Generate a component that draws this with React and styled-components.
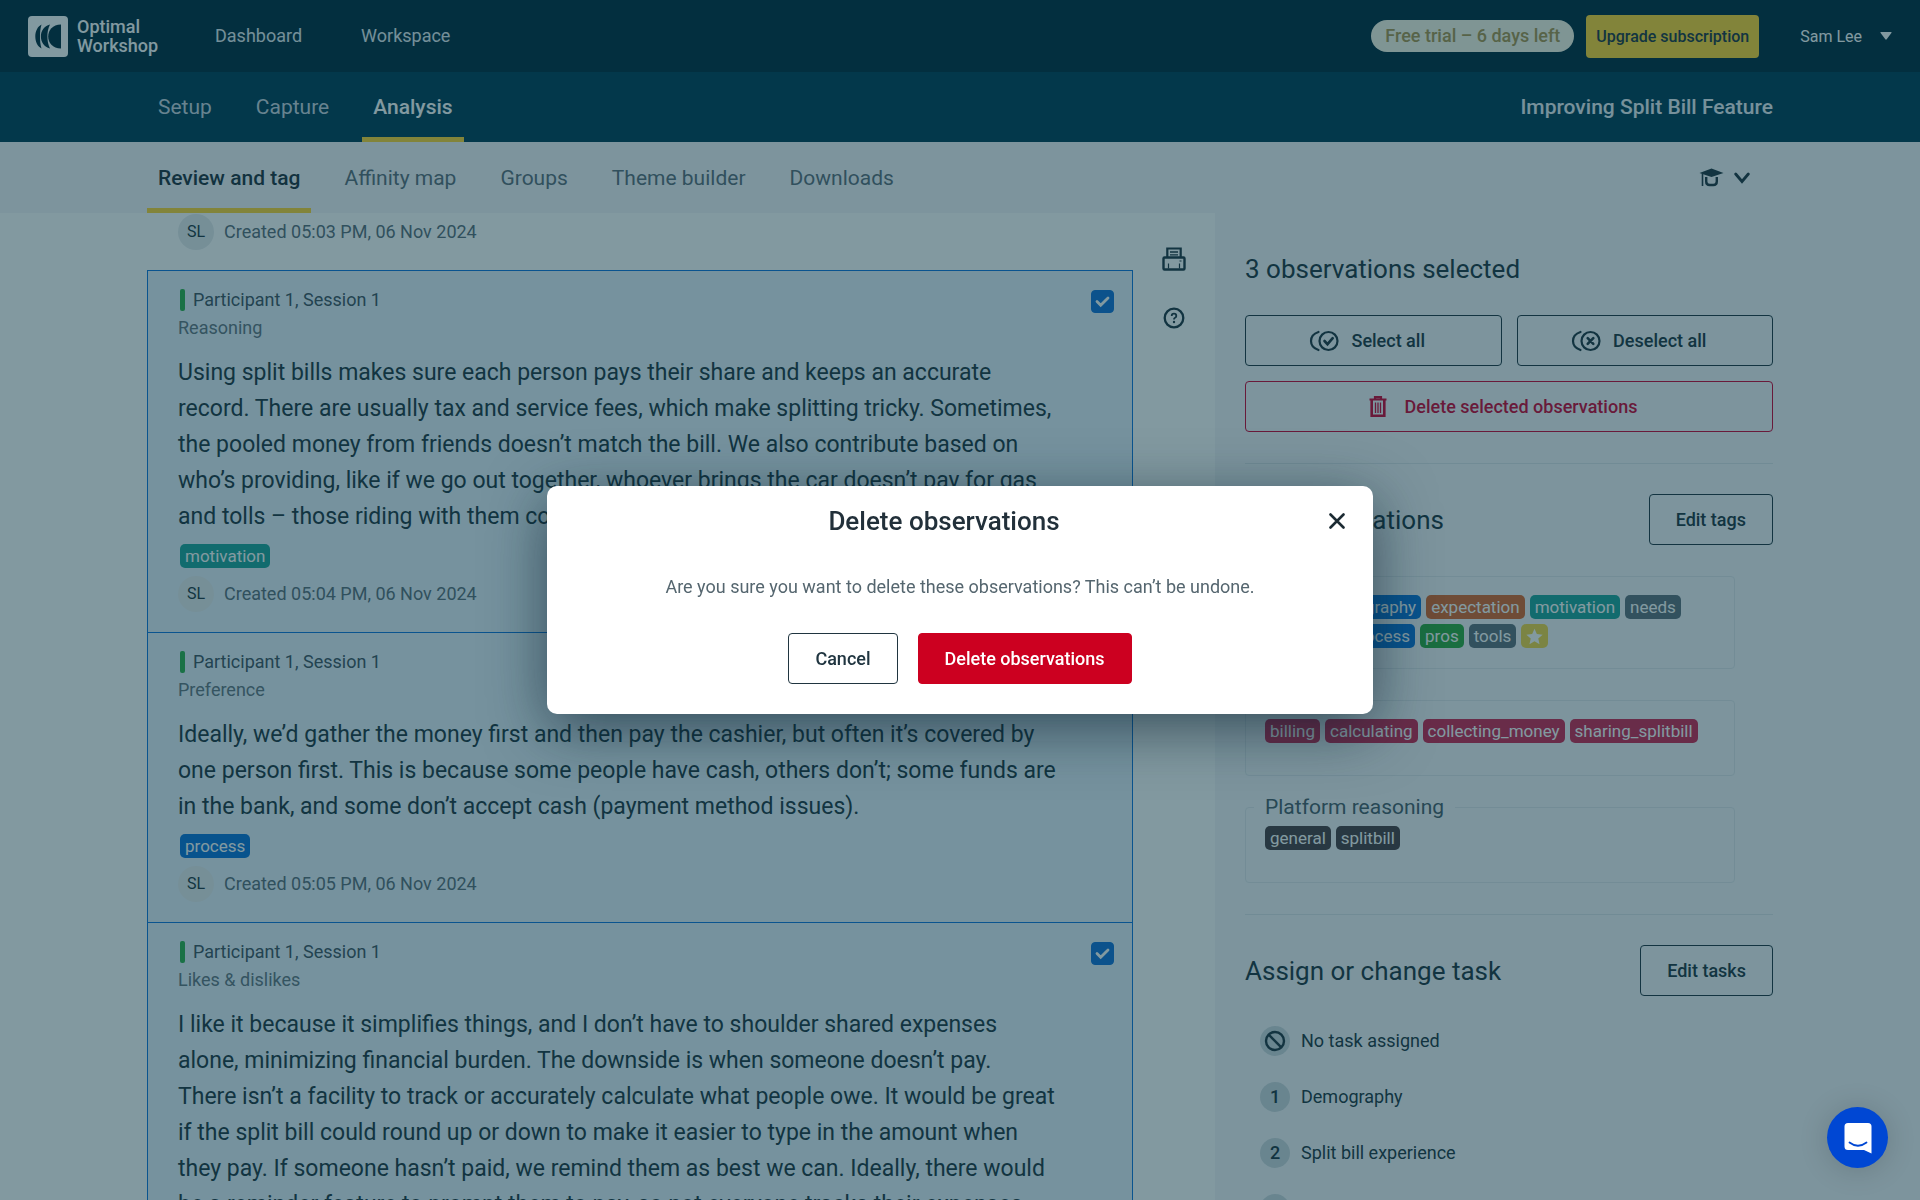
import React from "react";
import styled, { createGlobalStyle, css } from "styled-components";

const GlobalStyle = createGlobalStyle`
  * {
    box-sizing: border-box;
  }

  body {
    margin: 0;
    font-family: Roboto, "Liberation Sans", sans-serif;
    font-size: 18px;
    line-height: 28px;
    color: #203540;
    background: #ffffff;
  }

  h1, h2, h3, p, ul {
    margin: 0;
    padding: 0;
    font-weight: 400;
  }

  button {
    font-family: inherit;
    cursor: pointer;
  }
`;

const Page = styled.div`
  display: flex;
  flex-direction: column;
  height: 100vh;
  overflow: hidden;
`;

/* ---------- top bar ---------- */

const TopBar = styled.header`
  display: flex;
  align-items: center;
  flex-shrink: 0;
  height: 72px;
  padding: 0 28px;
  background: #002a3c;
`;

const Brand = styled.a`
  display: flex;
  align-items: center;
  gap: 9px;
  width: 187px;
  color: #ffffff;
  font-weight: 500;
  line-height: 19px;
  text-decoration: none;
`;

const TopLinks = styled.nav`
  display: flex;
  flex: 1;
  gap: 59px;
`;

const TopLink = styled.a`
  color: #e3eaf0;
  text-decoration: none;
`;

const TrialPill = styled.span`
  padding: 2px 14px;
  border-radius: 16px;
  background: #f9f6e6;
  color: #a8934f;
  font-weight: 500;
`;

const UpgradeButton = styled.button`
  height: 43px;
  margin-left: 12px;
  padding: 0 10px;
  border: 0;
  border-radius: 4px;
  background: #ffd433;
  color: #203540;
  font-size: 16px;
  font-weight: 500;
`;

const UserButton = styled.button`
  display: flex;
  align-items: center;
  gap: 18px;
  margin-left: 41px;
  padding: 0;
  border: 0;
  background: none;
  color: #ffffff;
  font-size: 16px;
`;

/* ---------- study tabs ---------- */

const StudyBar = styled.div`
  display: flex;
  align-items: center;
  justify-content: space-between;
  flex-shrink: 0;
  height: 70px;
  padding: 0 147px;
  background: #003c54;
  color: #e9eef5;
  font-size: 21px;
`;

const SubBar = styled(StudyBar)`
  height: 71px;
  background: #f4f5f9;
  color: #203540;
`;

const Tabs = styled.nav`
  display: flex;
  height: 100%;
  gap: 22px;
`;

const Tab = styled.a`
  display: flex;
  align-items: center;
  padding: 5px 11px 0;
  border-bottom: 5px solid transparent;
  color: ${(props) => (props.$dark ? "#c8d3de" : "#5c6c78")};
  text-decoration: none;

  ${(props) =>
    props.$active &&
    css`
      border-color: #ffd433;
      color: ${props.$dark ? "#ffffff" : "#1f313c"};
      font-weight: 500;
    `}
`;

const StudyTitle = styled.h1`
  font-size: 21px;
  font-weight: 500;
`;

const LearnButton = styled.button`
  display: flex;
  align-items: center;
  gap: 10px;
  margin-right: 23px;
  padding: 0;
  border: 0;
  background: none;
  color: #203540;
`;

/* ---------- content ---------- */

const Content = styled.div`
  display: flex;
  flex: 1;
  min-height: 0;
  padding-left: 147px;
`;

const Feed = styled.main`
  flex: 1;
  min-width: 0;
  overflow: hidden;
`;

const Card = styled.article`
  padding: 15px 28px 20px 30px;
  border: 1px solid #0f74dc;
  border-bottom: 0;
  background: #e6f1fb;

  ${(props) =>
    props.$plain &&
    css`
      padding-top: 0;
      border-color: transparent;
      background: none;
    `}
`;

const CardTop = styled.div`
  display: flex;
  align-items: flex-start;
  justify-content: space-between;
`;

const Participant = styled.h2`
  display: flex;
  align-items: center;
  gap: 8px;
  padding-left: 2px;
  color: #41525f;
  font-size: 18px;

  &::before {
    content: "";
    width: 5px;
    height: 22px;
    border-radius: 2px;
    background: #2fae4b;
  }
`;

const Question = styled.p`
  color: #64747f;
`;

const CheckLabel = styled.label`
  display: grid;
  margin: 4px -10px 0 0;

  > * {
    grid-area: 1 / 1;
  }
`;

const CheckBox = styled.input`
  appearance: none;
  width: 23px;
  height: 23px;
  margin: 0;
  border: 1px solid #1271d6;
  border-radius: 4px;

  &:checked {
    background: #1271d6;
  }
`;

const Quote = styled.p`
  margin: 13px 0 9px;
  color: #203540;
  font-size: 23px;
  line-height: 36px;
  white-space: pre-line;
`;

const TagList = styled.div`
  display: flex;
  flex-wrap: wrap;
  gap: 5px;
  padding-left: ${(props) => props.$indent}px;
`;

const Tag = styled.span`
  display: flex;
  align-items: center;
  height: 24px;
  padding: 0 5px;
  border-radius: 5px;
  background: ${(props) => props.$color};
  color: #ffffff;
  font-size: 17px;
`;

const Meta = styled.div`
  display: flex;
  align-items: center;
  gap: 10px;
  margin-top: ${(props) => (props.$first ? 0 : 8)}px;
  color: #5b6c78;
`;

const Avatar = styled.span`
  display: grid;
  place-items: center;
  width: 36px;
  height: 36px;
  border-radius: 50%;
  background: #e6eaed;
  color: #203540;
  font-size: 16px;
`;

const Tools = styled.div`
  display: flex;
  flex-direction: column;
  align-items: center;
  gap: 36px;
  width: 82px;
  padding-top: 34px;
`;

const ToolButton = styled.button`
  display: flex;
  padding: 0;
  border: 0;
  background: none;
  color: #1f3440;
`;

/* ---------- side panel ---------- */

const Panel = styled.aside`
  width: 705px;
  padding: 38px 147px 0 30px;
  background: #f4f5f9;
  overflow: hidden;
`;

const PanelTitle = styled.h2`
  font-size: 26px;
  line-height: 36px;
`;

const PanelHead = styled.div`
  display: flex;
  align-items: center;
  justify-content: space-between;
`;

const Actions = styled.div`
  display: grid;
  grid-template-columns: 1fr 1fr;
  gap: 15px;
  margin-top: 28px;
`;

const Button = styled.button`
  display: flex;
  align-items: center;
  justify-content: center;
  gap: 12px;
  height: 51px;
  padding: 0 26px;
  border: 1px solid currentColor;
  border-radius: 4px;
  background: transparent;
  color: ${(props) => (props.$danger ? "#cc0033" : "#203540")};
  font-size: 18px;
  font-weight: 500;

  ${(props) =>
    props.$icon &&
    css`
      padding-right: 38px;
    `}

  ${(props) =>
    props.$wide &&
    css`
      grid-column: 1 / -1;
      gap: 18px;
    `}

  ${(props) =>
    props.$solid &&
    css`
      border-color: #cc0020;
      background: #cc0020;
      color: #ffffff;
    `}
`;

const Divider = styled.hr`
  height: 1px;
  margin: 31px 0 30px;
  border: 0;
  background: #dde3e9;
`;

const TagGroup = styled.fieldset`
  min-height: 90px;
  margin: 17px 38px 0 0;
  padding: 5px 8px 20px;
  border: 1px solid #e0e5eb;
  border-radius: 4px;
`;

const Legend = styled.legend`
  padding: 0 11px;
  color: #4a5c69;
  font-size: 21px;
`;

const TaskList = styled.ul`
  display: flex;
  flex-direction: column;
  gap: 26px;
  margin-top: 30px;
  padding-left: 15px;
  list-style: none;
`;

const Task = styled.li`
  display: flex;
  align-items: center;
  gap: 11px;
  height: 30px;
`;

const TaskBadge = styled.span`
  display: grid;
  place-items: center;
  width: 30px;
  height: 30px;
  border-radius: 50%;
  background: #cdd6dc;
  font-weight: 500;
`;

/* ---------- overlay ---------- */

const Backdrop = styled.div`
  position: fixed;
  inset: 0;
  display: flex;
  align-items: center;
  justify-content: center;
  background: rgba(6, 52, 66, 0.5);
`;

const Dialog = styled.div`
  width: 826px;
  padding-bottom: 30px;
  border-radius: 10px;
  background: #ffffff;
  box-shadow: 0 14px 60px rgba(5, 30, 45, 0.6);
`;

const DialogHead = styled.div`
  display: flex;
  align-items: center;
  height: 70px;
  padding: 0 16px 0 24px;
`;

const DialogTitle = styled.h2`
  flex: 1;
  color: #22303a;
  font-size: 26px;
  font-weight: 500;
  text-align: center;
`;

const CloseButton = styled.button`
  display: grid;
  place-items: center;
  width: 40px;
  height: 40px;
  padding: 0;
  border: 0;
  background: none;
  color: #1c2b33;
`;

const DialogText = styled.p`
  padding: 17px 30px 32px;
  color: #55666f;
  text-align: center;
`;

const DialogActions = styled.div`
  display: flex;
  justify-content: center;
  gap: 20px;
`;

const ChatButton = styled.button`
  position: fixed;
  right: 32px;
  bottom: 32px;
  display: grid;
  place-items: center;
  width: 61px;
  height: 61px;
  padding: 0;
  border: 0;
  border-radius: 50%;
  background: #0047d3;
  box-shadow: 0 2px 30px rgba(0, 0, 0, 0.16);
`;

/* ---------- icons ---------- */

const Logo = () => (
  <svg width="40" height="41" viewBox="0 0 40 41" aria-hidden="true">
    <rect width="40" height="41" rx="4" fill="#ffffff" />
    <g fill="#002a3c">
      <path d="M13.5 8.500C9.500 10.500 7.300 15.500 7.300 20.500S9.500 30.500 13.500 32.500C12.300 28.500 12 24.500 12 20.500S12.300 12.500 13.500 8.500Z" />
      <path d="M22 8.500C16 10 12.900 15 12.900 20.500S16 31 22 32.500C20 28.500 19.400 24.500 19.400 20.500S20 12.500 22 8.500Z" />
      <path d="M33 8.500C24.500 8.500 20.200 14.500 20.200 20.500S24.500 32.500 33 32.500Z" />
    </g>
  </svg>
);

const Caret = () => (
  <svg width="12" height="8" viewBox="0 0 12 8" aria-hidden="true">
    <path d="M1 0h10q1 0 .4.900L6.700 7.300q-.7.800-1.400 0L.6.900Q0 0 1 0Z" fill="currentColor" />
  </svg>
);

const Mortarboard = () => (
  <svg width="25" height="19" viewBox="0 0 25 19" aria-hidden="true">
    <path d="M12.500.5 24.500 5 12.500 9 .5 5Z" fill="currentColor" />
    <path d="M3.500 5.500V18" stroke="currentColor" strokeWidth="1.600" />
    <path
      d="M7.200 9v4.500q0 3.500 3.500 3.500h3.600q3.500 0 3.500-3.500V9"
      fill="none"
      stroke="currentColor"
      strokeWidth="2.400"
    />
  </svg>
);

const Chevron = () => (
  <svg width="16" height="12" viewBox="0 0 16 12" aria-hidden="true">
    <path
      d="m1.700 2 6.300 7.500L14.300 2"
      fill="none"
      stroke="currentColor"
      strokeWidth="2.800"
      strokeLinecap="round"
    />
  </svg>
);

const Tick = () => (
  <svg width="23" height="23" viewBox="0 0 23 23" pointerEvents="none" aria-hidden="true">
    <path
      d="m6 11.500 3.700 3.700 7.300-7.200"
      fill="none"
      stroke="#ffffff"
      strokeWidth="2.800"
      strokeLinecap="round"
    />
  </svg>
);

const Printer = () => (
  <svg width="24" height="24" viewBox="0 0 24 24" fill="none" stroke="currentColor" aria-hidden="true">
    <path d="M5.300 10.500V1.500h13.400v9" strokeWidth="2.200" />
    <path d="M8 5h8M8 7.800h8" strokeWidth="1.300" />
    <rect x="1.500" y="10.500" width="21" height="12" rx="1" strokeWidth="2.400" />
    <path d="M6.500 16.500v5M17.500 16.500v5M17.500 14h2" strokeWidth="1.200" />
  </svg>
);

const Help = () => (
  <svg width="22" height="22" viewBox="0 0 22 22" fill="none" stroke="currentColor" aria-hidden="true">
    <circle cx="11" cy="11" r="9.300" strokeWidth="2.300" />
    <path d="M8.700 9q0-2.300 2.300-2.300T13.300 9q0 1.200-1.200 1.800T11 12.500" strokeWidth="1.800" />
    <circle cx="11" cy="15" r="1.200" fill="currentColor" stroke="none" />
  </svg>
);

const DoubleCircle = ({ crossed }) => (
  <svg
    width="30"
    height="22"
    viewBox="0 0 30 22"
    fill="none"
    stroke="currentColor"
    strokeWidth="2.200"
    strokeLinecap="round"
    aria-hidden="true"
  >
    <circle cx="19.500" cy="11" r="9" />
    <path d="M9.500 2Q2 4.500 2 11t7.500 9" />
    {crossed ? (
      <path d="m16.700 8.200 5.600 5.600m0-5.600-5.600 5.600" strokeWidth="2.600" />
    ) : (
      <path d="m15.500 11 3 3.200 5.200-6" strokeWidth="2.600" />
    )}
  </svg>
);

const Trash = () => (
  <svg width="18" height="22" viewBox="0 0 18 22" fill="none" stroke="currentColor" aria-hidden="true">
    <path d="M.5 3.500h17M6 3V1.200h6V3" strokeWidth="2.200" />
    <path d="M2.700 4v15.700h12.600V4" strokeWidth="2.600" />
    <path d="M6.500 6.500v10.500M9 6.500v10.500M11.500 6.500v10.500" strokeWidth="1.300" />
  </svg>
);

const Star = () => (
  <svg width="17" height="17" viewBox="0 0 24 24" fill="#ffffff" aria-label="Starred">
    <path d="m12 1 3.300 7.600 8.200.8-6.200 5.500 1.800 8.100-7.100-4.200L4.900 23l1.800-8.100L.5 9.400l8.200-.8Z" />
  </svg>
);

const NoTask = () => (
  <svg width="22" height="22" viewBox="0 0 22 22" fill="none" stroke="currentColor" aria-hidden="true">
    <circle cx="11" cy="11" r="9" strokeWidth="2.400" />
    <path d="m4.700 4.700 12.600 12.600" strokeWidth="2.400" />
  </svg>
);

const Cross = () => (
  <svg width="16" height="16" viewBox="0 0 16 16" aria-hidden="true">
    <path
      d="m1.500 1.500 13 13m0-13-13 13"
      stroke="currentColor"
      strokeWidth="2.600"
      strokeLinecap="round"
    />
  </svg>
);

const Chat = () => (
  <svg width="28" height="32" viewBox="0 0 28 32" aria-hidden="true">
    <path d="M4 1h20q3.500 0 3.500 3.500V31.500L20 28H4Q.5 28 .5 24.500v-20Q.5 1 4 1Z" fill="#ffffff" />
    <path
      d="M5.500 20.500q8.500 6.500 17 0"
      fill="none"
      stroke="#0047d3"
      strokeWidth="1.800"
      strokeLinecap="round"
    />
  </svg>
);

/* ---------- data ---------- */

const blue = "#0b72d8";
const teal = "#1fa39a";
const orange = "#d9642c";
const green = "#2fa83f";
const slate = "#5f6f7b";
const crimson = "#cc2450";
const black = "#4a3d42";
const yellow = "#f0d545";

const observations = [
  {
    question: "Reasoning",
    text: `Using split bills makes sure each person pays their share and keeps an accurate
record. There are usually tax and service fees, which make splitting tricky. Sometimes,
the pooled money from friends doesn’t match the bill. We also contribute based on
who’s providing, like if we go out together, whoever brings the car doesn’t pay for gas
and tolls – those riding with them cover it.`,
    tag: "motivation",
    color: teal,
    created: "05:04 PM, 06 Nov 2024",
  },
  {
    question: "Preference",
    text: `Ideally, we’d gather the money first and then pay the cashier, but often it’s covered by
one person first. This is because some people have cash, others don’t; some funds are
in the bank, and some don’t accept cash (payment method issues).`,
    tag: "process",
    color: blue,
    created: "05:05 PM, 06 Nov 2024",
  },
  {
    question: "Likes & dislikes",
    text: `I like it because it simplifies things, and I don’t have to shoulder shared expenses
alone, minimizing financial burden. The downside is when someone doesn’t pay.
There isn’t a facility to track or accurately calculate what people owe. It would be great
if the split bill could round up or down to make it easier to type in the amount when
they pay. If someone hasn’t paid, we remind them as best we can. Ideally, there would
be a reminder feature to prompt them to pay, so not everyone tracks their expenses.`,
    tag: "needs",
    color: slate,
    created: "05:06 PM, 06 Nov 2024",
  },
];

const tagGroups = [
  {
    name: "General",
    tags: [
      ["cons", orange],
      ["demography", blue],
      ["expectation", orange],
      ["motivation", teal],
      ["needs", slate],
      ["platform", crimson],
      ["process", blue],
      ["pros", green],
      ["tools", slate],
      ["star", yellow],
    ],
  },
  {
    name: "Activity",
    tags: [
      ["billing", crimson],
      ["calculating", crimson],
      ["collecting_money", crimson],
      ["sharing_splitbill", crimson],
    ],
  },
  {
    name: "Platform reasoning",
    tags: [
      ["general", black],
      ["splitbill", black],
    ],
  },
];

const tasks = ["Demography", "Split bill experience", "Split bill feature"];

/* ---------- page ---------- */

function Created({ when, first }) {
  return (
    <Meta $first={first}>
      <Avatar>SL</Avatar>
      <span>Created {when}</span>
    </Meta>
  );
}

function Observation({ item }) {
  return (
    <Card>
      <CardTop>
        <div>
          <Participant>Participant 1, Session 1</Participant>
          <Question>{item.question}</Question>
        </div>
        <CheckLabel>
          <CheckBox type="checkbox" defaultChecked aria-label={`Select ${item.question}`} />
          <Tick />
        </CheckLabel>
      </CardTop>
      <Quote>{item.text}</Quote>
      <TagList $indent={2}>
        <Tag $color={item.color}>{item.tag}</Tag>
      </TagList>
      <Created when={item.created} />
    </Card>
  );
}

function DeleteDialog() {
  return (
    <Backdrop>
      <Dialog role="dialog" aria-modal="true" aria-labelledby="dialog-title">
        <DialogHead>
          <DialogTitle id="dialog-title">Delete observations</DialogTitle>
          <CloseButton aria-label="Close">
            <Cross />
          </CloseButton>
        </DialogHead>
        <DialogText>
          Are you sure you want to delete these observations? This can’t be undone.
        </DialogText>
        <DialogActions>
          <Button>Cancel</Button>
          <Button $solid>Delete observations</Button>
        </DialogActions>
      </Dialog>
    </Backdrop>
  );
}

function App() {
  return (
    <>
      <GlobalStyle />
      <Page>
        <TopBar>
          <Brand href="#">
            <Logo />
            <span>
              Optimal
              <br />
              Workshop
            </span>
          </Brand>
          <TopLinks>
            <TopLink href="#">Dashboard</TopLink>
            <TopLink href="#">Workspace</TopLink>
          </TopLinks>
          <TrialPill>Free trial – 6 days left</TrialPill>
          <UpgradeButton>Upgrade subscription</UpgradeButton>
          <UserButton>
            Sam Lee
            <Caret />
          </UserButton>
        </TopBar>

        <StudyBar>
          <Tabs>
            <Tab $dark href="#">Setup</Tab>
            <Tab $dark href="#">Capture</Tab>
            <Tab $dark $active href="#">Analysis</Tab>
          </Tabs>
          <StudyTitle>Improving Split Bill Feature</StudyTitle>
        </StudyBar>

        <SubBar>
          <Tabs>
            <Tab $active href="#">Review and tag</Tab>
            <Tab href="#">Affinity map</Tab>
            <Tab href="#">Groups</Tab>
            <Tab href="#">Theme builder</Tab>
            <Tab href="#">Downloads</Tab>
          </Tabs>
          <LearnButton aria-label="Learn">
            <Mortarboard />
            <Chevron />
          </LearnButton>
        </SubBar>

        <Content>
          <Feed>
            <Card $plain>
              <Created first when="05:03 PM, 06 Nov 2024" />
            </Card>
            {observations.map((item) => (
              <Observation key={item.question} item={item} />
            ))}
          </Feed>

          <Tools>
            <ToolButton aria-label="Print">
              <Printer />
            </ToolButton>
            <ToolButton aria-label="Help">
              <Help />
            </ToolButton>
          </Tools>

          <Panel>
            <PanelTitle>3 observations selected</PanelTitle>
            <Actions>
              <Button $icon>
                <DoubleCircle />
                Select all
              </Button>
              <Button $icon>
                <DoubleCircle crossed />
                Deselect all
              </Button>
              <Button $icon $wide $danger>
                <Trash />
                Delete selected observations
              </Button>
            </Actions>
            <Divider />
            <PanelHead>
              <PanelTitle>Tag observations</PanelTitle>
              <Button>Edit tags</Button>
            </PanelHead>
            {tagGroups.map((group) => (
              <TagGroup key={group.name}>
                <Legend>{group.name}</Legend>
                <TagList $indent={11}>
                  {group.tags.map(([name, color]) => (
                    <Tag key={name} $color={color}>
                      {name === "star" ? <Star /> : name}
                    </Tag>
                  ))}
                </TagList>
              </TagGroup>
            ))}
            <Divider />
            <PanelHead>
              <PanelTitle>Assign or change task</PanelTitle>
              <Button>Edit tasks</Button>
            </PanelHead>
            <TaskList>
              <Task>
                <TaskBadge>
                  <NoTask />
                </TaskBadge>
                No task assigned
              </Task>
              {tasks.map((task, i) => (
                <Task key={task}>
                  <TaskBadge>{i + 1}</TaskBadge>
                  {task}
                </Task>
              ))}
            </TaskList>
          </Panel>
        </Content>
      </Page>
      <DeleteDialog />
      <ChatButton aria-label="Open chat">
        <Chat />
      </ChatButton>
    </>
  );
}

export default App;
